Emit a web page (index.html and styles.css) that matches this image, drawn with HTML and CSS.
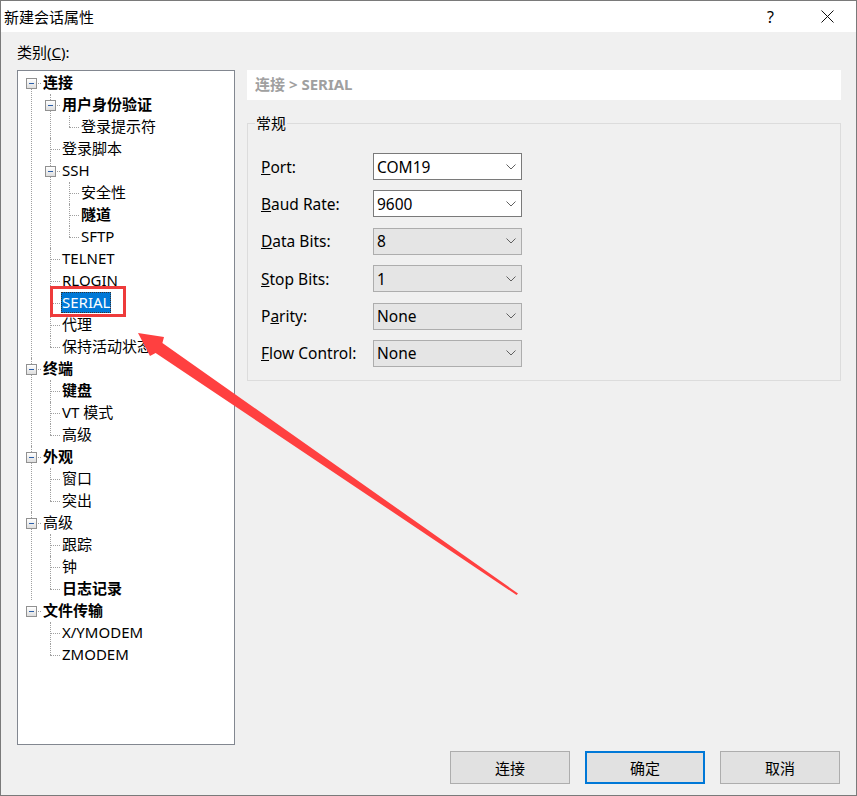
FILE: index.html
```html
<!DOCTYPE html>
<html lang="zh-CN">
<head>
    <meta charset="UTF-8">
    <title>新建会话属性</title>
    <link rel="stylesheet" href="styles.css">
</head>
<body>
<div class="dialog">
    <!-- Barra de título -->
    <div class="titlebar">
        <span class="title">新建会话属性</span>
        <span class="cap-btn">?</span>
        <span class="cap-btn">
            <svg width="13" height="13" viewBox="0 0 13 13"><path d="M0.5 0.5 L12.5 12.5 M12.5 0.5 L0.5 12.5" stroke="#111" stroke-width="1"/></svg>
        </span>
    </div>

    <div class="content">
        <div class="cat-label">类别(<u>C</u>):</div>

        <!-- Árvore de categorias -->
        <div class="tree-box">
            <ul class="tree">
                <li>
                    <span class="tog"></span><div class="row"><span class="b">连接</span></div>
                    <ul>
                        <li>
                            <span class="tog"></span><div class="row"><span class="b">用户身份验证</span></div>
                            <ul>
                                <li><div class="row"><span>登录提示符</span></div></li>
                            </ul>
                        </li>
                        <li><div class="row"><span>登录脚本</span></div></li>
                        <li>
                            <span class="tog"></span><div class="row"><span>SSH</span></div>
                            <ul>
                                <li><div class="row"><span>安全性</span></div></li>
                                <li><div class="row"><span class="b">隧道</span></div></li>
                                <li><div class="row"><span>SFTP</span></div></li>
                            </ul>
                        </li>
                        <li><div class="row"><span>TELNET</span></div></li>
                        <li><div class="row"><span>RLOGIN</span></div></li>
                        <li><div class="row"><span class="sel">SERIAL</span></div></li>
                        <li><div class="row"><span>代理</span></div></li>
                        <li><div class="row"><span>保持活动状态</span></div></li>
                    </ul>
                </li>
                <li>
                    <span class="tog"></span><div class="row"><span class="b">终端</span></div>
                    <ul>
                        <li><div class="row"><span class="b">键盘</span></div></li>
                        <li><div class="row"><span>VT 模式</span></div></li>
                        <li><div class="row"><span>高级</span></div></li>
                    </ul>
                </li>
                <li>
                    <span class="tog"></span><div class="row"><span class="b">外观</span></div>
                    <ul>
                        <li><div class="row"><span>窗口</span></div></li>
                        <li><div class="row"><span>突出</span></div></li>
                    </ul>
                </li>
                <li>
                    <span class="tog"></span><div class="row"><span>高级</span></div>
                    <ul>
                        <li><div class="row"><span>跟踪</span></div></li>
                        <li><div class="row"><span>钟</span></div></li>
                        <li><div class="row"><span class="b">日志记录</span></div></li>
                    </ul>
                </li>
                <li>
                    <span class="tog"></span><div class="row"><span class="b">文件传输</span></div>
                    <ul>
                        <li><div class="row"><span>X/YMODEM</span></div></li>
                        <li><div class="row"><span>ZMODEM</span></div></li>
                    </ul>
                </li>
            </ul>
        </div>

        <!-- Painel da direita -->
        <div class="panel">
            <div class="crumb">连接 &gt; SERIAL</div>
            <fieldset class="group">
                <legend>常规</legend>
                <div class="form">
                    <label><u>P</u>ort:</label>
                    <div class="combo"><span>COM19</span><svg width="10" height="6" viewBox="0 0 10 6"><path d="M0.5 0.5 L5 5 L9.5 0.5" fill="none" stroke="#606060"/></svg></div>

                    <label><u>B</u>aud Rate:</label>
                    <div class="combo"><span>9600</span><svg width="10" height="6" viewBox="0 0 10 6"><path d="M0.5 0.5 L5 5 L9.5 0.5" fill="none" stroke="#606060"/></svg></div>

                    <label><u>D</u>ata Bits:</label>
                    <div class="combo ro"><span>8</span><svg width="10" height="6" viewBox="0 0 10 6"><path d="M0.5 0.5 L5 5 L9.5 0.5" fill="none" stroke="#606060"/></svg></div>

                    <label><u>S</u>top Bits:</label>
                    <div class="combo ro"><span>1</span><svg width="10" height="6" viewBox="0 0 10 6"><path d="M0.5 0.5 L5 5 L9.5 0.5" fill="none" stroke="#606060"/></svg></div>

                    <label>P<u>a</u>rity:</label>
                    <div class="combo ro"><span>None</span><svg width="10" height="6" viewBox="0 0 10 6"><path d="M0.5 0.5 L5 5 L9.5 0.5" fill="none" stroke="#606060"/></svg></div>

                    <label><u>F</u>low Control:</label>
                    <div class="combo ro"><span>None</span><svg width="10" height="6" viewBox="0 0 10 6"><path d="M0.5 0.5 L5 5 L9.5 0.5" fill="none" stroke="#606060"/></svg></div>
                </div>
            </fieldset>
        </div>
    </div>

    <!-- Botões -->
    <div class="buttons">
        <button class="btn">连接</button>
        <button class="btn default">确定</button>
        <button class="btn">取消</button>
    </div>

    <!-- Marcação vermelha -->
    <svg class="annot" width="857" height="796" viewBox="0 0 857 796">
        <rect x="51.5" y="287.5" width="73" height="28" fill="none" stroke="#ee3b3b" stroke-width="3"/>
        <polygon points="138,333 164,337 162.4,343.1 518,593.5 516.5,595 155.6,352.9 150,356" fill="#ff4040"/>
    </svg>
</div>
</body>
</html>
```

FILE: styles.css
```css
body {
    margin: 0;
    font-family: "Noto Sans", "Noto Sans CJK SC", sans-serif;
    font-size: 15px;
    color: #000;
}

.dialog {
    position: relative;
    width: 857px;
    height: 796px;
    box-sizing: border-box;
    border: 1px solid #7a7a7a;
    background-color: #f0f0f0;
    display: flex;
    flex-direction: column;
}

.titlebar {
    height: 31px;
    background-color: #fff;
    display: flex;
    align-items: center;
    padding-left: 3px;
}

.title {
    flex: 1;
}

.cap-btn {
    width: 57px;
    display: flex;
    justify-content: center;
    align-items: center;
    font-size: 16px;
}

.content {
    display: grid;
    grid-template-columns: 218px 594px;
    grid-template-rows: 38px 675px;
    column-gap: 12px;
    padding-left: 16px;
}

.cat-label {
    grid-column: 1;
    grid-row: 1;
    padding-top: 10px;
    line-height: 20px;
}

.tree-box {
    grid-column: 1;
    grid-row: 2;
    border: 1px solid #828790;
    background-color: #fff;
    overflow: hidden;
    padding-top: 1px;
}

.panel {
    grid-column: 2;
    grid-row: 2;
}

.tree,
.tree ul {
    list-style: none;
    margin: 0;
    padding: 0;
}

.tree {
    padding-left: 13px;
}

.tree ul {
    margin-left: 19px;
}

.tree li {
    position: relative;
}

.tree li::before {
    content: "";
    position: absolute;
    left: 0;
    top: 11px;
    width: 10px;
    border-top: 1px dotted #a0a0a0;
}

.tree li::after {
    content: "";
    position: absolute;
    left: 0;
    top: 0;
    bottom: 0;
    border-left: 1px dotted #a0a0a0;
}

.tree > li:first-child::after {
    top: 11px;
}

.tree li:last-child::after {
    bottom: auto;
    height: 11px;
}

.tree > li:last-child::after {
    height: 0;
}

.row {
    height: 22px;
    padding-left: 12px;
    white-space: nowrap;
}

.row span {
    display: inline-block;
    height: 21px;
    line-height: 21px;
    padding: 0 1px;
    margin-left: -1px;
}

.b {
    font-weight: bold;
}

.sel {
    background-color: #0078d7;
    color: #fff;
    outline: 1px dotted #333;
    outline-offset: -1px;
}

.tog {
    position: absolute;
    left: -5px;
    top: 6px;
    width: 11px;
    height: 11px;
    box-sizing: border-box;
    border: 1px solid #919191;
    background: linear-gradient(#ffffff, #dedede);
    z-index: 1;
}

.tog::after {
    content: "";
    position: absolute;
    left: 2px;
    top: 4px;
    width: 5px;
    height: 1px;
    background-color: #2c5fa8;
}

.crumb {
    height: 30px;
    line-height: 29px;
    background-color: #fff;
    padding-left: 8px;
    color: #a0a0a0;
    font-weight: bold;
}

.group {
    margin: 13px 0 0;
    padding: 0;
    border: 1px solid #dcdcdc;
    min-width: 0;
}

.group legend {
    margin-left: 7px;
    padding: 0 1px;
    line-height: 20px;
}

.form {
    display: grid;
    grid-template-columns: 112px 149px;
    grid-auto-rows: 27px;
    row-gap: 10.4px;
    align-items: center;
    padding: 20px 0 13px 13px;
}

.form label {
    font-size: 15.5px;
}

.combo {
    height: 27px;
    box-sizing: border-box;
    border: 1px solid #7a7a7a;
    background-color: #fff;
    display: flex;
    align-items: center;
    justify-content: space-between;
    padding: 0 5px 0 3px;
    font-size: 15.5px;
}

.combo.ro {
    background-color: #e5e5e5;
    border-color: #adadad;
}

.buttons {
    display: flex;
    justify-content: flex-end;
    gap: 15px;
    padding: 6px 16px 0 0;
}

.btn {
    width: 120px;
    height: 33px;
    box-sizing: border-box;
    border: 1px solid #adadad;
    background-color: #e1e1e1;
    font-family: "Noto Sans", "Noto Sans CJK SC", sans-serif;
    font-size: 15px;
    color: #000;
}

.btn.default {
    border: 2px solid #0078d7;
}

.annot {
    position: absolute;
    left: -1px;
    top: -1px;
    pointer-events: none;
}
```
